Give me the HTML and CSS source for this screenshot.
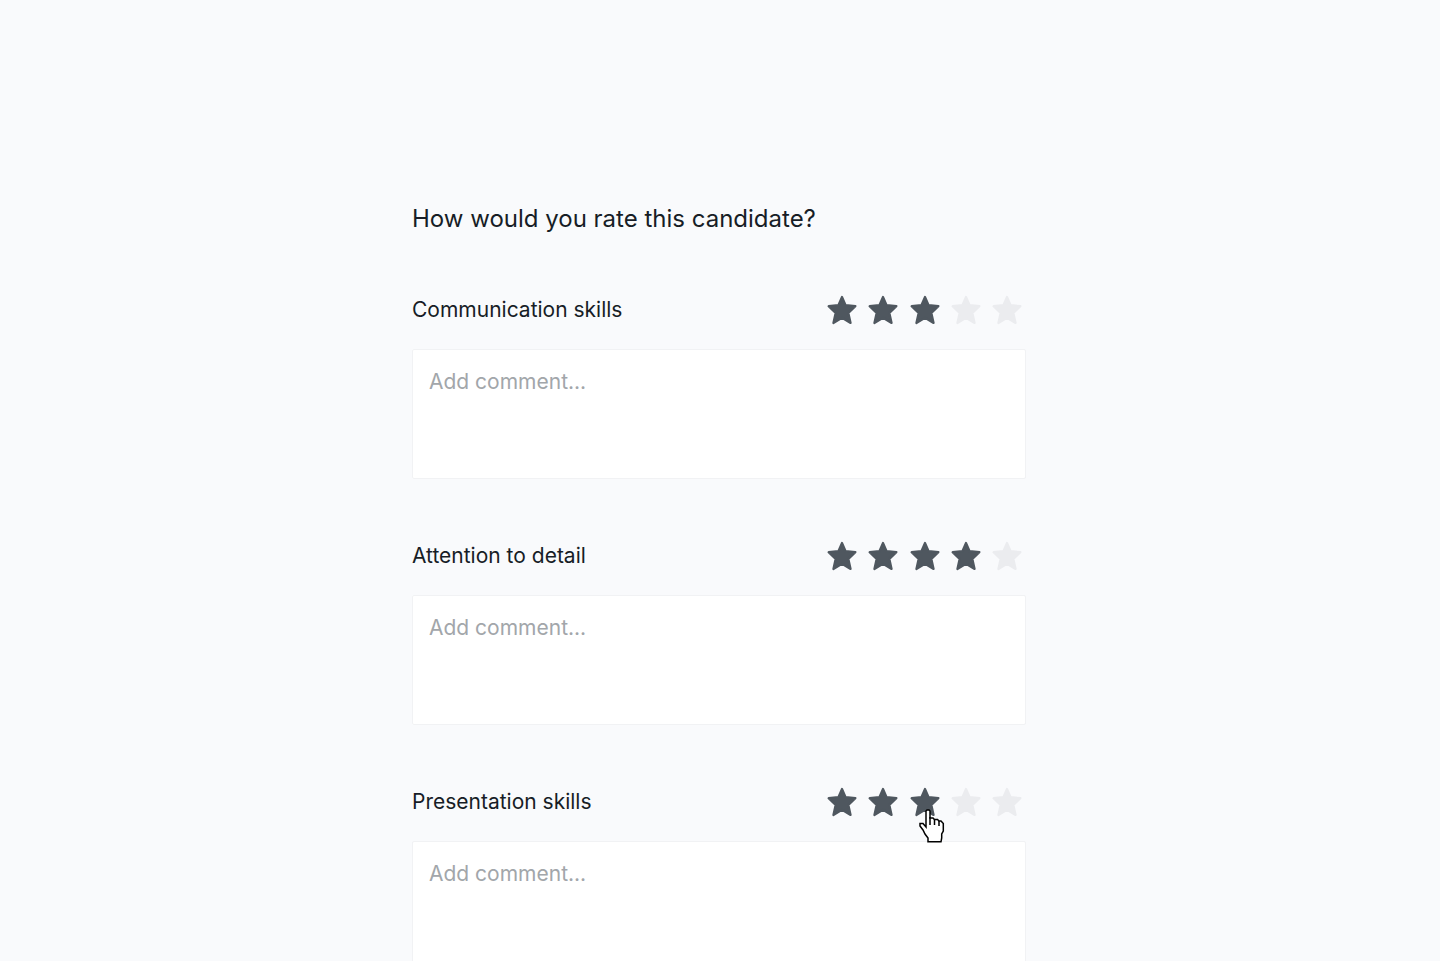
FILE: index.html
```
<!DOCTYPE html>
<html lang="en">
<head>
<meta charset="utf-8">
<meta name="viewport" content="width=device-width, initial-scale=1">
<title>Candidate rating</title>
<link rel="stylesheet" href="styles.css">
</head>
<body>
<svg class="sprite" aria-hidden="true">
  <symbol id="star" viewBox="0 0 30 30">
    <path d="M15 2 L18.6 10.2 L28.4 11.2 L21.4 17.9 L23.6 28 L15 22.9 L6.4 28 L8.6 17.9 L1.6 11.2 L11.4 10.2 Z" fill="currentColor" stroke="currentColor" stroke-width="2.2" stroke-linejoin="round"/>
  </symbol>
</svg>
<form class="survey">
  <h1 class="title">How would you rate this candidate?</h1>

  <section class="question">
    <div class="question-head">
      <label class="question-label" for="communication">Communication skills</label>
      <div class="stars" role="radiogroup" aria-label="Communication skills">
        <label class="star"><input type="radio" name="r1" value="1" aria-label="1 star"><svg><use href="#star"/></svg></label>
        <label class="star"><input type="radio" name="r1" value="2" aria-label="2 stars"><svg><use href="#star"/></svg></label>
        <label class="star"><input type="radio" name="r1" value="3" aria-label="3 stars" checked><svg><use href="#star"/></svg></label>
        <label class="star"><input type="radio" name="r1" value="4" aria-label="4 stars"><svg><use href="#star"/></svg></label>
        <label class="star"><input type="radio" name="r1" value="5" aria-label="5 stars"><svg><use href="#star"/></svg></label>
      </div>
    </div>
    <textarea class="comment" id="communication" placeholder="Add comment..."></textarea>
  </section>

  <section class="question">
    <div class="question-head">
      <label class="question-label" for="attention">Attention to detail</label>
      <div class="stars" role="radiogroup" aria-label="Attention to detail">
        <label class="star"><input type="radio" name="r2" value="1" aria-label="1 star"><svg><use href="#star"/></svg></label>
        <label class="star"><input type="radio" name="r2" value="2" aria-label="2 stars"><svg><use href="#star"/></svg></label>
        <label class="star"><input type="radio" name="r2" value="3" aria-label="3 stars"><svg><use href="#star"/></svg></label>
        <label class="star"><input type="radio" name="r2" value="4" aria-label="4 stars" checked><svg><use href="#star"/></svg></label>
        <label class="star"><input type="radio" name="r2" value="5" aria-label="5 stars"><svg><use href="#star"/></svg></label>
      </div>
    </div>
    <textarea class="comment" id="attention" placeholder="Add comment..."></textarea>
  </section>

  <section class="question">
    <div class="question-head">
      <label class="question-label" for="presentation">Presentation skills</label>
      <div class="stars" role="radiogroup" aria-label="Presentation skills">
        <label class="star"><input type="radio" name="r3" value="1" aria-label="1 star"><svg><use href="#star"/></svg></label>
        <label class="star"><input type="radio" name="r3" value="2" aria-label="2 stars"><svg><use href="#star"/></svg></label>
        <label class="star"><input type="radio" name="r3" value="3" aria-label="3 stars" checked><svg><use href="#star"/></svg>
          <svg class="pointer" viewBox="0 0 26 34" aria-hidden="true">
            <path d="M7 2 L8 1 H10 L11 2 V9 H14 L15.5 10.5 H18.5 L20 12 H22 L24.3 14.5 V22 L22.7 25 V29 L22 32.8 H9 V29 L6 25 L4 21 L1 17 V14.5 H4 L7 18 Z" fill="#fff" stroke="#000" stroke-width="1.5"/>
            <path d="M11 8 V16 M15.5 10 V16 M20 12 V17" fill="none" stroke="#000" stroke-width="1.5"/>
          </svg></label>
        <label class="star"><input type="radio" name="r3" value="4" aria-label="4 stars"><svg><use href="#star"/></svg></label>
        <label class="star"><input type="radio" name="r3" value="5" aria-label="5 stars"><svg><use href="#star"/></svg></label>
      </div>
    </div>
    <textarea class="comment" id="presentation" placeholder="Add comment..."></textarea>
  </section>
</form>
</body>
</html>
```
FILE: styles.css
```
* {
  box-sizing: border-box;
}

body {
  margin: 0;
  height: 100vh;
  overflow: hidden;
  padding: 199px 2px 0 0;
  background: #f9fafc;
  color: #171d26;
  font-family: Inter, "Liberation Sans", sans-serif;
}

.sprite {
  display: none;
}

.survey {
  max-width: 614px;
  margin: 0 auto;
}

.title {
  margin: 0 0 51px;
  font-size: 24px;
  font-weight: 400;
  line-height: 40px;
}

.question {
  display: flex;
  flex-direction: column;
  gap: 19px;
  margin-bottom: 57px;
}

.question-head {
  display: flex;
  align-items: center;
  justify-content: space-between;
  height: 40px;
  padding-right: 4px;
}

.question-label {
  font-size: 21px;
  line-height: 40px;
}

.stars {
  display: flex;
  justify-content: space-between;
  width: 195px;
}

.star {
  position: relative;
  display: block;
  width: 30px;
  height: 30px;
  color: #4f575f;
  cursor: pointer;
}

.star svg {
  display: block;
  width: 30px;
  height: 30px;
}

.star input {
  position: absolute;
  inset: 0;
  width: 100%;
  height: 100%;
  margin: 0;
  appearance: none;
  cursor: pointer;
}

.star:has(input:checked) ~ .star {
  color: #ebecef;
}

.star .pointer {
  position: absolute;
  z-index: 1;
  left: 9px;
  top: 22px;
  width: 26px;
  height: 34px;
  pointer-events: none;
}

.comment {
  display: block;
  width: 100%;
  height: 130px;
  padding: 16px;
  border: 1px solid #f1f2f4;
  border-radius: 2px;
  background: #fff;
  color: inherit;
  font-family: inherit;
  font-size: 21px;
  line-height: 32px;
  resize: none;
}

.comment::placeholder {
  color: #a2a6aa;
  opacity: 1;
}
```
